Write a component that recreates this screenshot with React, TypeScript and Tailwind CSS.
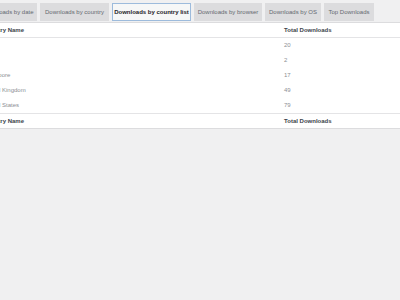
import React from "react";

interface ITab {
  label: string;
  width: string;
  active?: boolean;
}

const tabs: ITab[] = [
  { label: "Downloads by date", width: "w-[58px]" },
  { label: "Downloads by country", width: "w-[69px]" },
  { label: "Downloads by country list", width: "w-[79px]", active: true },
  { label: "Downloads by browser", width: "w-[68px]" },
  { label: "Downloads by OS", width: "w-[56px]" },
  { label: "Top Downloads", width: "w-[50px]" },
];

const rows = [
  { country: "India", total: 20 },
  { country: "Iran", total: 2 },
  { country: "Singapore", total: 17 },
  { country: "United Kingdom", total: 49 },
  { country: "United States", total: 79 },
];

const App: React.FunctionComponent = () => {
  return (
    <div
      className="w-[400px] h-[300px] overflow-hidden bg-[#f0f0f1]"
      style={{ fontFamily: '"Liberation Sans", Arial, sans-serif' }}
    >
      <div className="flex gap-[3px] ml-[-21px] pt-[3px] h-[22px]">
        {tabs.map((tab) => (
          <div
            key={tab.label}
            className={
              tab.active
                ? `${tab.width} h-[18px] shrink-0 flex items-center justify-center whitespace-nowrap text-[6px] font-bold text-[#1d2327] bg-[#f6f7f7] border border-[#9dbbdc]`
                : `${tab.width} h-[18px] shrink-0 flex items-center justify-center whitespace-nowrap text-[6px] text-[#646970] bg-[#dcdcde]`
            }
          >
            {tab.label}
          </div>
        ))}
      </div>

      <div className="ml-[-17px] w-[430px] bg-white border-y border-[#dcdcde]">
        <div className="flex h-[15px] items-center border-b border-[#e4e4e6] text-[6px] font-bold text-[#3c434a]">
          <div className="w-[301px]">Country Name</div>
          <div>Total Downloads</div>
        </div>
        {rows.map((row) => (
          <div
            key={row.country}
            className="flex h-[15px] items-center text-[6px] text-[#8c8f94]"
          >
            <div className="w-[301px]">{row.country}</div>
            <div>{row.total}</div>
          </div>
        ))}
        <div className="flex h-[15px] items-center border-t border-[#e4e4e6] text-[6px] font-bold text-[#3c434a]">
          <div className="w-[301px]">Country Name</div>
          <div>Total Downloads</div>
        </div>
      </div>
    </div>
  );
};

export default App;
